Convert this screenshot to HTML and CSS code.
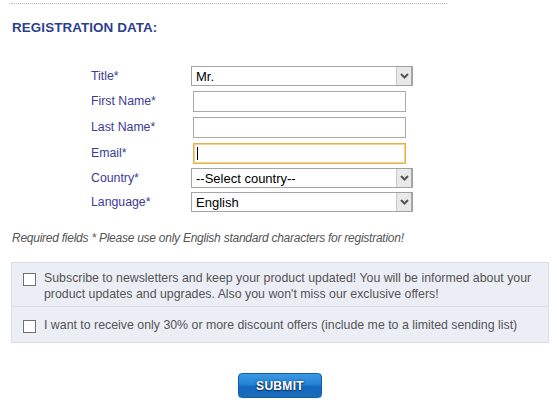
FILE: index.html
```html
<!DOCTYPE html>
<html>
<head>
<meta charset="utf-8">
<link rel="stylesheet" href="styles.css">
</head>
<body>
<div class="page">
  <div class="rule"></div>
  <h2 class="heading">REGISTRATION DATA:</h2>
  <form class="form">
    <label class="lbl">Title*</label>
    <div class="sel"><select><option>Mr.</option></select><span class="arrow"><svg width="9" height="6" viewBox="0 0 9 6"><path d="M1 1 L4.5 4.5 L8 1" fill="none" stroke="#555" stroke-width="2"/></svg></span></div>

    <label class="lbl">First Name*</label>
    <div class="fld"><input type="text"></div>

    <label class="lbl">Last Name*</label>
    <div class="fld"><input type="text"></div>

    <label class="lbl">Email*</label>
    <div class="fld email"><input type="text"><span class="caret"></span></div>

    <label class="lbl">Country*</label>
    <div class="sel"><select><option>--Select country--</option></select><span class="arrow"><svg width="9" height="6" viewBox="0 0 9 6"><path d="M1 1 L4.5 4.5 L8 1" fill="none" stroke="#555" stroke-width="2"/></svg></span></div>

    <label class="lbl">Language*</label>
    <div class="sel"><select><option>English</option></select><span class="arrow"><svg width="9" height="6" viewBox="0 0 9 6"><path d="M1 1 L4.5 4.5 L8 1" fill="none" stroke="#555" stroke-width="2"/></svg></span></div>
  </form>

  <p class="note">Required fields * Please use only English standard characters for registration!</p>

  <div class="panel">
    <div class="opt first">
      <input type="checkbox" class="cb">
      <span>Subscribe to newsletters and keep your product updated! You will be informed about your product updates and upgrades. Also you won't miss our exclusive offers!</span>
    </div>
    <div class="opt second">
      <input type="checkbox" class="cb">
      <span>I want to receive only 30% or more discount offers (include me to a limited sending list)</span>
    </div>
  </div>

  <div class="actions">
    <button type="button" class="submit">SUBMIT</button>
  </div>
</div>
</body>
</html>
```

FILE: styles.css
```css
* { box-sizing: border-box; }
html, body { margin: 0; padding: 0; background: #fff; }
body { font-family: "Liberation Sans", Arial, sans-serif; font-size: 12px; color: #555; }

.page { padding: 3px 0 0 11px; width: 549px; }

.rule { width: 436px; border-top: 1px dotted #b5b5b5; height: 0; }

.heading {
  margin: 16px 0 0 1px;
  font-size: 13.4px;
  font-weight: bold;
  color: #2d3f8e;
  line-height: 16px;
  letter-spacing: 0.1px;
}

.form {
  margin: 28px 0 0 80px;
  display: grid;
  grid-template-columns: 100px 222px;
  grid-template-rows: 24px 26px 26px 26px 24px 24px;
  align-items: center;
}

.lbl { color: #3b3b98; font-size: 12.3px; line-height: 14px; }

.sel { position: relative; width: 222px; height: 20px; }
.sel select {
  -webkit-appearance: none; appearance: none;
  width: 100%; height: 100%;
  border: 1px solid #a5a5a5;
  background: #fff;
  font-family: "Liberation Sans", Arial, sans-serif;
  font-size: 13px;
  color: #000;
  padding: 0 0 0 4px;
  margin: 0;
  border-radius: 0;
  outline: none;
}
.sel .arrow {
  position: absolute; right: 1px; top: 1px; bottom: 1px;
  width: 16px;
  background: #e9e9e9;
  border-left: 1px solid #c8c8c8;
  border-right: 1px solid #a8a8a8;
  display: flex; align-items: center; justify-content: center;
}
.sel .arrow::after {
  content: "";
  position: absolute; left: -1px; right: -2px; top: -1px; bottom: -1px;
  border: 1px solid #a0a0a0;
  border-left: none;
}

.fld { position: relative; margin-left: 2px; width: 213px; height: 21px; }
.fld input {
  width: 100%; height: 100%;
  border: 1px solid #a9a9a9;
  background: #fff;
  margin: 0; padding: 0 4px;
  font-family: "Liberation Sans", Arial, sans-serif;
  font-size: 13px;
  outline: none;
  border-radius: 0;
}
.fld.email input { border: 1px solid #e3b04b; box-shadow: inset 0 0 0 1px #f4d38e; }
.caret {
  position: absolute; left: 4px; top: 4px;
  width: 1px; height: 13px; background: #000;
}

.note {
  margin: 17px 0 0 1px;
  font-style: italic;
  color: #555;
  font-size: 12px;
  letter-spacing: -0.25px;
  line-height: 14px;
}

.panel {
  margin: 17px 0 0 0;
  width: 538px;
  background: #ebeef5;
  border: 1px solid #d6dce8;
}
.opt {
  display: flex;
  align-items: flex-start;
  gap: 8px;
  padding: 0 8px 0 11px;
  line-height: 16px;
  color: #555;
  font-size: 12.35px;
}
.opt.first { padding-top: 7px; padding-bottom: 4px; border-bottom: 1px solid #d6dce8; }
.opt.second { padding-top: 10px; padding-bottom: 9px; }

.cb {
  -webkit-appearance: none; appearance: none;
  flex: none;
  width: 13px; height: 13px;
  margin: 3px 0 0 0;
  border: 1px solid #707070;
  background: #fff;
  border-radius: 0;
}

.actions { display: flex; justify-content: center; padding: 30px 0 0 0; width: 538px; }

.submit {
  width: 84px; height: 25px;
  border: 1px solid #155e9f;
  border-radius: 4px;
  background: linear-gradient(to bottom, #3a9ae4 0%, #2383d3 45%, #1468bd 55%, #1a6cbc 100%);
  color: #fff;
  font-family: "Liberation Sans", Arial, sans-serif;
  font-weight: bold;
  font-size: 12px;
  letter-spacing: 0.3px;
  text-shadow: 0 1px 1px #0a3060, 0 0 2px #0a3060;
  padding: 0;
  box-shadow: 0 1px 1px rgba(0,0,0,0.25);
}
```
